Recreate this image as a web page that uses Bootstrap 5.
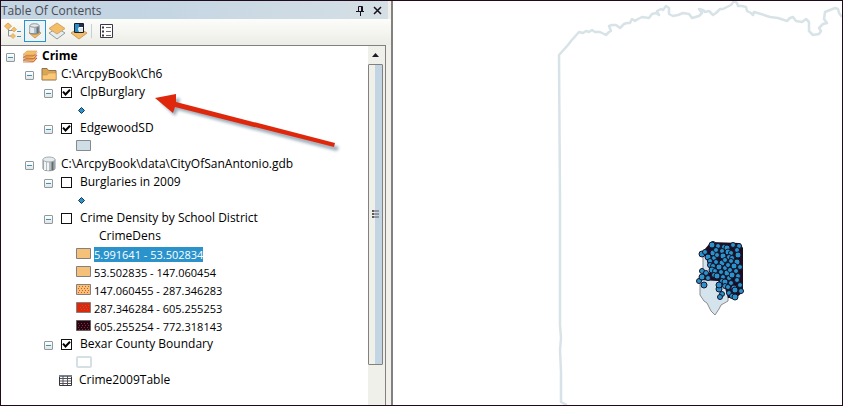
<!DOCTYPE html>
<html lang="en">
<head>
<meta charset="utf-8">
<meta name="viewport" content="width=device-width, initial-scale=1">
<title>Table Of Contents</title>
<link href="https://cdn.jsdelivr.net/npm/bootstrap@5.3.0/dist/css/bootstrap.min.css" rel="stylesheet">
<style>
body{font:12px/18px "Open Sans","Noto Sans",sans-serif;color:#000;background:#fff}
.app-frame{border:1px solid #200a1c;height:100vh}
.toc-panel{flex:0 0 392px;background:#f1f1ec;border-right:2px solid #858080}
.toc-title{height:18px;background:linear-gradient(90deg,#c3d5e3 0,#c3d5e3 35%,#d5dfe5);color:#4b4b55;padding:0 6px 0 0;margin-right:3px}
.toc-title h1{font-size:12px;line-height:17px}
.plain{border:0;padding:0;background:none;display:flex;align-items:center;justify-content:center}
.toc-tools{height:26px;background:linear-gradient(#fcfcfa,#edede7);padding:1px 1px 3px}
.tool-btn{width:22px;height:22px;border:1px solid transparent}
.tool-btn.active{border-color:#2b93cc;background:#eef3f5}
.tool-rule{width:1px;height:14px;background:#c3d0d8;margin:0 4px 0 1px}
.tree-wrap{background:#fff;border:1px solid #858080;border-left:0;border-bottom:0;margin-right:5px}
.tree{padding-top:1px}
.tree ul{padding-left:19px}
.tree .tree-root{padding-left:5px}
.tree-row{height:18px;white-space:nowrap}
.twist{width:9px;height:9px;border:1px solid #92999d;border-radius:1px;background:linear-gradient(#fff,#dfe5e6);margin-top:2px;flex:none}
.twist::before{content:"";width:5px;height:1px;background:#4292b5}
.node-icon{width:16px;height:16px;margin:0 4px 0 7px;flex:none}
.layer-check{appearance:none;width:11px;height:11px;border:1px solid #111;background:#fff;margin:0 8px 0 8px;flex:none}
.layer-check:checked{background:#fff url("data:image/svg+xml,%3Csvg xmlns='http://www.w3.org/2000/svg' viewBox='0 0 9 9'%3E%3Cpath d='M1 3.7 3.5 6.5 8 1.7' fill='none' stroke='%23000' stroke-width='2'/%3E%3C/svg%3E")}
.legend-row{padding-left:32px}
.legend-row.field{padding-left:55px}
.legend-value{font-size:11px;line-height:15px}
.swatch{width:16px;height:12px;margin-right:2px;flex:none}
.point{width:7px;height:7px;margin-left:2px}
.picked{background:#2b93cc;color:#fff}
.table-row{padding-left:8px}
.scroller{width:17px;padding-right:2px;background:#f0f0eb;flex:none}
.scroll-up{height:18px}
.scroll-thumb{border:1px solid #858080;border-radius:1px;margin-bottom:40px;background:linear-gradient(90deg,#f0f0ea 0 45%,#c3d5e3 45%)}
.map-view{min-width:0}
.arrow-note{left:145px;top:82px;width:200px;height:75px;pointer-events:none}
</style>
<script src="https://cdn.jsdelivr.net/npm/bootstrap@5.3.0/dist/js/bootstrap.bundle.min.js"></script>
</head>
<body>
<div class="app-frame d-flex overflow-hidden position-relative">
<aside class="toc-panel d-flex flex-column">
  <header class="toc-title d-flex align-items-center">
    <h1 class="m-0 fw-normal me-auto">Table Of Contents</h1>
    <button class="plain me-2" aria-label="Auto hide"><svg width="9" height="11" fill="none" stroke="#171020"><path d="M2.500 6V1.500h4V6M5.500 1v5M0 6.500h8M4.500 7v4"/></svg></button>
    <button class="plain" aria-label="Close"><svg width="9" height="9" stroke="#171020" stroke-width="1.500"><path d="m1 1 7 7m0-7-7 7"/></svg></button>
  </header>
  <div class="toc-tools d-flex align-items-center" role="toolbar" aria-label="List options">
    <button class="plain tool-btn" aria-label="List by drawing order"><svg width="18" height="18"><path d="M4.500 7v7h3M5 8.500h5M13 9.500h4M13 14.500h4" fill="none" stroke="#8a9194"/><path d="M13 9.500h4M13 14.500h4" stroke="#4792bd"/><path d="m4 1 3.500 3L4 7.500.5 4z" fill="#f4bd68" stroke="#d9a45c"/><path d="m10 5 2.500 2.500L10 10 7.500 7.500zM9 11.500l2.500 2.500L9 16.500 6.500 14z" fill="#f4bd68" stroke="#d9a45c" stroke-width=".7"/></svg></button>
    <button class="plain tool-btn active" aria-label="List by source"><svg width="16" height="18"><path d="m2 11 6-4 6 4-6 5z" fill="#f3b95f" stroke="#c99c59"/><path d="M3 3.500v7c0 2 9 2 9 0v-7" fill="#aebfc9" stroke="#68757e"/><path d="M4 5v6M6 5v6" stroke="#f7fafb" stroke-width="1.500"/><path d="M10.500 4v7" stroke="#65717b" stroke-width="2"/><ellipse cx="7.500" cy="3.500" rx="4.500" ry="1.800" fill="#e3ebef" stroke="#8c989d"/></svg></button>
    <button class="plain tool-btn" aria-label="List by visibility"><svg width="18" height="18"><path d="m1 11 8-5 8 5-8 6z" fill="#e6edf0" stroke="#939b9e"/><path d="m1 6.500 8-5.500 8 5.500L9 12z" fill="#f4bd68" stroke="#cda468"/></svg></button>
    <button class="plain tool-btn" aria-label="List by selection"><svg width="18" height="18"><path d="m1 11 8-5 8 5-8 6z" fill="#f4bd68" stroke="#c99c59"/><path d="M4.500 1.500h9v9h-9z" fill="#fff" stroke="#171e2b"/><path d="M5 2h4v3l-1 2 1 3H5z" fill="#278dc6"/><path d="M9 2h4v3H9z" fill="#22324a"/><path d="M9 6h4v4H9z" fill="#dce6eb"/></svg></button>
    <span class="tool-rule"></span>
    <button class="plain tool-btn" aria-label="Options"><svg width="14" height="15"><path d="M.5.5h12v13H.5z" fill="#fff" stroke="#393746"/><path d="M6 3.500h5M6 7.500h5M6 11.500h5" stroke="#6a6873"/><path d="M2 3.500h2M2 7.500h2M2 11.500h2" stroke="#393746" stroke-width="2"/></svg></button>
  </div>
  <div class="tree-wrap d-flex flex-fill">
    <nav class="tree flex-fill" aria-label="Layers">
      <ul class="tree-root list-unstyled m-0"><li>
        <div class="tree-row d-flex align-items-center"><button class="plain twist" aria-label="Collapse Crime"></button>
          <svg class="node-icon" viewBox="0 0 16 16"><g fill="#f4bd68" stroke="#b98146" stroke-width=".8"><path d="M1 12.500 5 10h10l-3.500 3.500z"/><path d="M1 9.500 5 7h10l-3.500 3.500z"/><path d="M1 6.500 5 3h10l-3.500 4z" stroke="#e5a95a"/></g><path d="M1 14h10.500L15 10M1 8h10.500L15 4.500M1 11h10.500L15 7.500" fill="none" stroke="#c7512b" stroke-width=".7"/></svg><b>Crime</b></div>
        <ul class="list-unstyled m-0">
          <li><div class="tree-row d-flex align-items-center"><button class="plain twist" aria-label="Collapse folder"></button>
            <svg class="node-icon" viewBox="0 0 16 16"><path d="M1 14V2.500h5l1.500 2H15V14z" fill="#d9a754" stroke="#8d7350"/><path d="M1.500 13.500V9H6l2-2h7v6.500z" fill="#fac877" stroke="#c69550" stroke-width=".6"/></svg>C:\ArcpyBook\Ch6</div>
            <ul class="list-unstyled m-0">
              <li><div class="tree-row d-flex align-items-center"><button class="plain twist" aria-label="Collapse ClpBurglary"></button><input class="layer-check" type="checkbox" id="l1" checked><label for="l1">ClpBurglary</label></div>
                <div class="tree-row legend-row d-flex align-items-center"><svg class="point" viewBox="0 0 7 7"><path d="M3.500.5 6.500 3.500l-3 3-3-3z" fill="#2b93cc" stroke="#173552"/></svg></div></li>
              <li><div class="tree-row d-flex align-items-center"><button class="plain twist" aria-label="Collapse EdgewoodSD"></button><input class="layer-check" type="checkbox" id="l2" checked><label for="l2">EdgewoodSD</label></div>
                <div class="tree-row legend-row d-flex align-items-center"><svg class="swatch"><path d="M.5.5h14v10H.5z" fill="#cfdee6" stroke="#858a8c"/></svg></div></li>
            </ul></li>
          <li><div class="tree-row d-flex align-items-center"><button class="plain twist" aria-label="Collapse geodatabase"></button>
            <svg class="node-icon" viewBox="0 0 16 16"><path d="M2 3.500v9c0 3 12 3 12 0v-9" fill="#b5bdc0" stroke="#888f93"/><path d="M4 5v9M7 6v8.500" stroke="#f2f5f6" stroke-width="2"/><path d="M11.500 5v9" stroke="#616a70" stroke-width="2"/><ellipse cx="8" cy="3.500" rx="6" ry="2.500" fill="#e6ebed" stroke="#a4abae"/></svg>C:\ArcpyBook\data\CityOfSanAntonio.gdb</div>
            <ul class="list-unstyled m-0">
              <li><div class="tree-row d-flex align-items-center"><button class="plain twist" aria-label="Collapse Burglaries"></button><input class="layer-check" type="checkbox" id="l3"><label for="l3">Burglaries in 2009</label></div>
                <div class="tree-row legend-row d-flex align-items-center"><svg class="point" viewBox="0 0 7 7"><path d="M3.500.5 6.500 3.500l-3 3-3-3z" fill="#2b93cc" stroke="#173552"/></svg></div></li>
              <li><div class="tree-row d-flex align-items-center"><button class="plain twist" aria-label="Collapse Crime Density"></button><input class="layer-check" type="checkbox" id="l4"><label for="l4">Crime Density by School District</label></div>
                <div class="tree-row legend-row field">CrimeDens</div>
                <div class="tree-row legend-row d-flex align-items-center"><svg class="swatch"><path d="M.5.5h14v10H.5z" fill="#f5c077" stroke="#858080"/></svg><span class="legend-value picked">5.991641 - 53.502834</span></div>
                <div class="tree-row legend-row d-flex align-items-center"><svg class="swatch"><path d="M.5.5h14v10H.5z" fill="#f5c077" stroke="#858080"/></svg><span class="legend-value">53.502835 - 147.060454</span></div>
                <div class="tree-row legend-row d-flex align-items-center"><svg class="swatch"><path d="M.5.5h14v10H.5z" fill="#f5c077" stroke="#858080"/><path d="M3 2.500h10M2 4.500h11M3 6.500h10M2 8.500h11" stroke="#e0532b" stroke-dasharray="1 2"/></svg><span class="legend-value">147.060455 - 287.346283</span></div>
                <div class="tree-row legend-row d-flex align-items-center"><svg class="swatch"><path d="M.5.5h14v10H.5z" fill="#df270c" stroke="#858080"/><path d="M6 3.500h7M4 5.500h9M5 7.500h8" stroke="#a85a43" stroke-dasharray="1 2"/></svg><span class="legend-value">287.346284 - 605.255253</span></div>
                <div class="tree-row legend-row d-flex align-items-center"><svg class="swatch"><path d="M.5.5h14v10H.5z" fill="#210817" stroke="#6b5c60"/><path d="M2 3.500h11M3 5.500h10M2 7.500h11M3 9.500h10" stroke="#9c2418" stroke-dasharray="1 2"/></svg><span class="legend-value">605.255254 - 772.318143</span></div></li>
              <li><div class="tree-row d-flex align-items-center"><button class="plain twist" aria-label="Collapse Bexar County"></button><input class="layer-check" type="checkbox" id="l5" checked><label for="l5">Bexar County Boundary</label></div>
                <div class="tree-row legend-row d-flex align-items-center"><svg class="swatch"><rect x="1" y="1" width="14" height="10" rx="1" fill="#fff" stroke="#d5e0e4" stroke-width="2"/></svg></div></li>
              <li><div class="tree-row table-row d-flex align-items-center"><svg class="node-icon" viewBox="1 0 16 16"><path d="M1.500 3.500h12v10h-12z" fill="#fff" stroke="#333039"/><path d="M1 4h13" stroke="#77828a" stroke-width="2"/><path d="M2 6.500h11M2 9h11M2 11.500h11M5 4v9M9.500 4v9" stroke="#55535a"/></svg>Crime2009Table</div></li>
            </ul></li>
        </ul></li></ul>
    </nav>
    <div class="scroller d-flex flex-column" aria-hidden="true">
      <div class="scroll-up d-flex align-items-center justify-content-center"><svg width="7" height="4"><path d="M0 4 3.500 0 7 4z" fill="#201824"/></svg></div>
      <div class="scroll-thumb flex-fill d-flex align-items-center justify-content-center"><svg width="7" height="9"><path d="M0 1h7M0 4h7M0 7h7" stroke="#5c5559"/><path d="M0 1h2M0 4h2M0 7h2" stroke="#111"/></svg></div>
    </div>
  </div>
</aside>
<main class="map-view flex-fill">
  <svg class="d-block w-100 h-100" viewBox="393 1 449 404" preserveAspectRatio="xMinYMin slice" role="img" aria-label="County map">
    <path d="M567 405 561 402V372L560 350 561 338 560 325V200L559 55 568 45 571 41 579 32 583 33 586 31 589 32 592 30 595 32 600 32 606 35 609 32 611 31 609 26 612 25 616 25 620 28 624 24 627 23 630 23 632 19 635 21 638 19 642 17 649 18 652 14 656 13 659 15 657 11 661 9 663 10 666 6 669 8 669 14 673 16 678 15 683 13 689 14 692 18 699 16 702 13 699 9 703 10 705 12 709 11 713 15 716 13 720 9 723 9 727 7 731 5 734 1 737 3 738 6 742 6 746 7 747 11 751 13 753 15 754 12 761 14 770 17 778 18 787 21 790 18 793 17 796 21 802 22 806 19 809 22 809 31 813 35 819 34 821 31 819 28 823 24 827 23 824 19 825 12 830 10 835 8 838 9 839 13 842 17" fill="none" stroke="#d8e3e7" stroke-width="2.500" stroke-linejoin="round"/>
    <path d="M703 254v21l-3 7v13l4 6 3 2 4 8 4 4 4-6 2-4 7-4v-16l-9-12-4-18z" fill="#d5e3ed" stroke="#8c8c92"/>
    <path d="M711 242 740 243 743 248V292L736 298 728 298 725 288 718 281 700 280 710 272 704 250z" fill="#1b0d24"/>
    <g id="incidents" fill="#2b93cc" stroke="#17142b" stroke-width="1"></g>
  </svg>
</main>
<svg class="arrow-note position-absolute" viewBox="145 82 200 75" aria-hidden="true">
  <defs><filter id="soft" x="-10%" y="-20%" width="120%" height="140%"><feGaussianBlur stdDeviation="1.500"/></filter></defs>
  <path d="M159 101 179 97 178 104 338 146 336 150 177 109 174 115z" fill="#8499a8" opacity=".8" filter="url(#soft)"/>
  <path d="M154 97 175 93 175 101 334 142 333 146 174 106 172 112z" fill="#df270c"/>
</svg>
</div>
<script>
// Lay the incident points out in rows, each with its own horizontal extent.
const rows = [[246,713,739],[251,710,740],[256,708,740],[261,709,740],[266,709,740],[271,704,740],[276,703,740],[281,719,740],[286,719,740],[291,728,740],[295,731,738]];
const points = [[702,254],[705,252],[699,281],[704,285],[702,271],[713,244],[719,289],[722,294],[720,297]];
rows.forEach(([y, from, to], r) => {
  for (let x = from + (r % 2) * 2, i = 0; x <= to; x += 5, i++) points.push([x + (i * 7 + r * 5) % 3 - 1, y + (i * 5 + r * 3) % 4 - 1]);
});
document.getElementById("incidents").innerHTML = points.map(([x, y], i) => `<circle cx="${x}" cy="${y}" r="${i % 3 ? 2.500 : 3}"/>`).join("");
</script>
</body>
</html>
